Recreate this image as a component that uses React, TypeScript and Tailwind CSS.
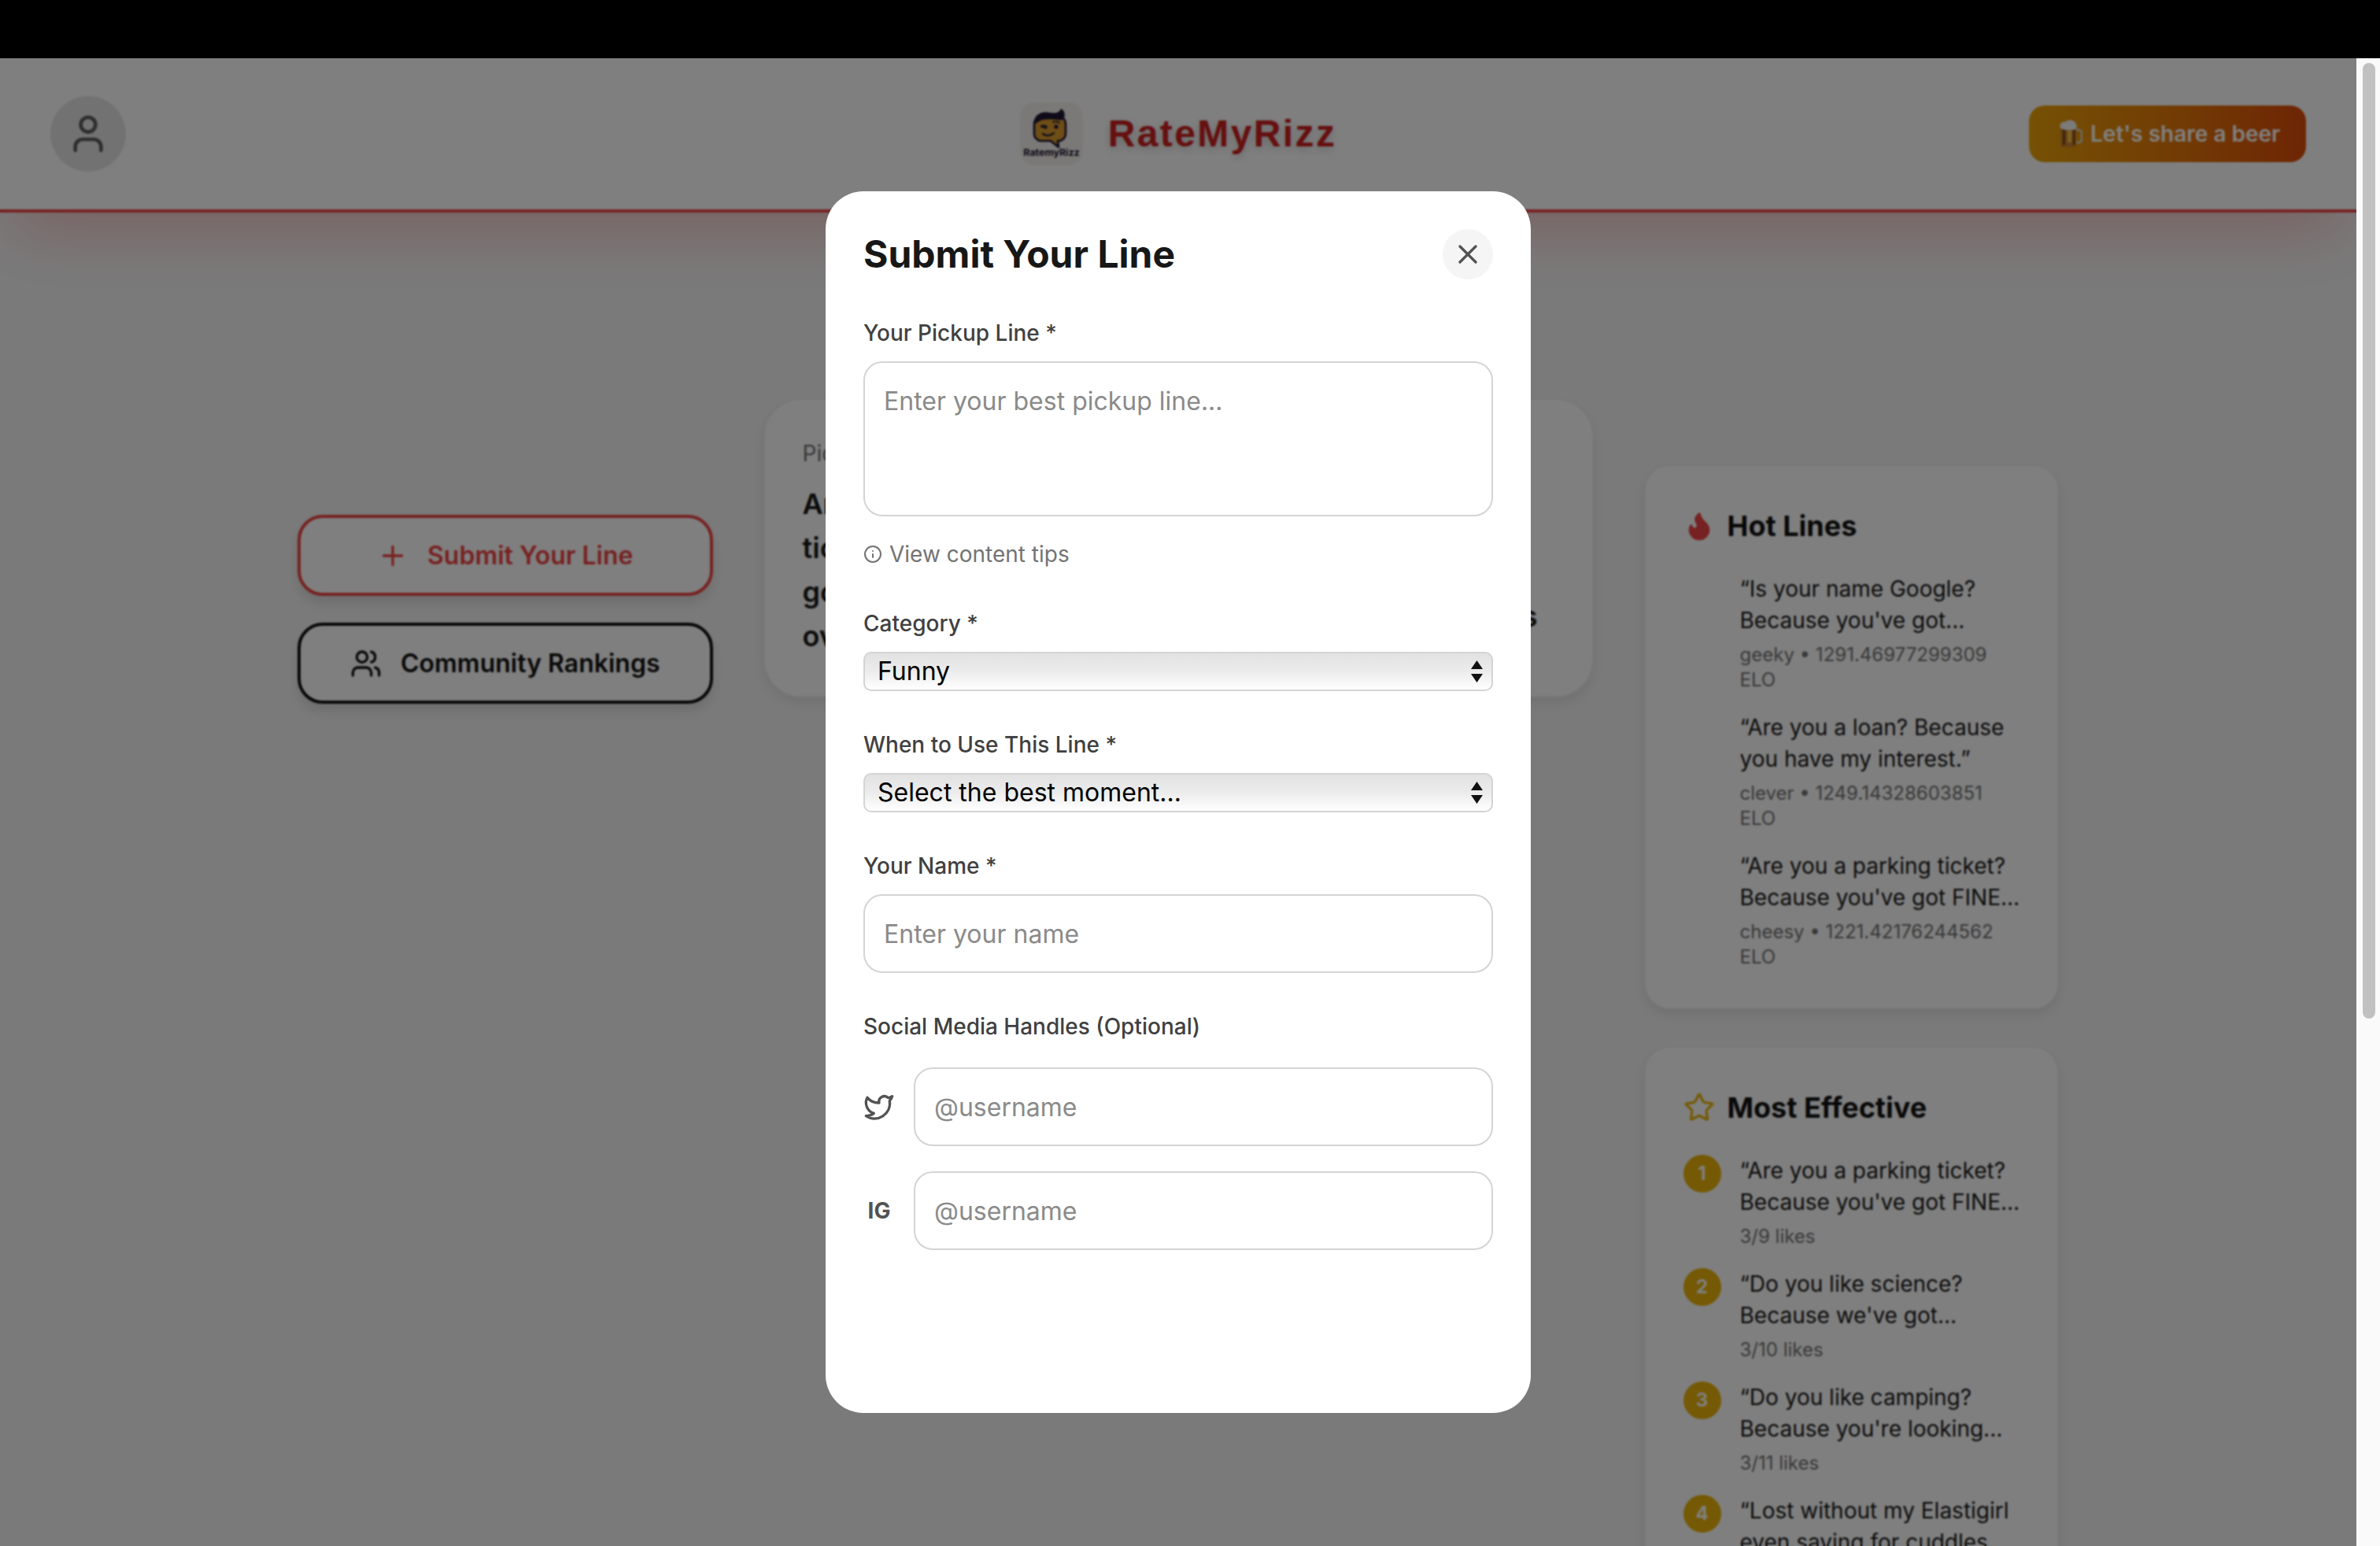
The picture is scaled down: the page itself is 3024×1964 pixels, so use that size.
import { Flame, Info, Plus, Star, Twitter, User, Users, X } from "lucide-react";

const hotLines = [
  { text: "“Is your name Google? Because you've got...", meta: "geeky • 1291.46977299309 ELO" },
  { text: "“Are you a loan? Because you have my interest.”", meta: "clever • 1249.14328603851 ELO" },
  { text: "“Are you a parking ticket? Because you've got FINE...", meta: "cheesy • 1221.42176244562 ELO" },
];

const effectiveLines = [
  { text: "“Are you a parking ticket? Because you've got FINE...", meta: "3/9 likes" },
  { text: "“Do you like science? Because we've got...", meta: "3/10 likes" },
  { text: "“Do you like camping? Because you're looking...", meta: "3/11 likes" },
  { text: "“Lost without my Elastigirl even saving for cuddles...", meta: "3/12 likes" },
];

function Logo() {
  return (
    <svg width="80" height="80" viewBox="0 0 80 80">
      <rect width="80" height="80" rx="18" fill="#f5f3ee" />
      <path
        d="M27 18h22a9 9 0 0 1 9 9v13a9 9 0 0 1-9 9h-1l1 8-10-8H27a9 9 0 0 1-9-9V27a9 9 0 0 1 9-9z"
        fill="#dd9c2e"
        stroke="#1e1533"
        strokeWidth="2.6"
        strokeLinejoin="round"
      />
      <path
        d="M18 29c-2-12 8-18 19-16 7 1 13 1 15-5 4 2 6 7 4 12-2 3-5 3-9 2-9-1-20-1-24 3-2 1-4 2-5 4z"
        fill="#1e1533"
      />
      <path d="M27 31c2-2 5-2 7 0M27 30l6 3" fill="none" stroke="#1e1533" strokeWidth="2" strokeLinecap="round" />
      <circle cx="46" cy="31" r="2.6" fill="#1e1533" />
      <path d="M42 25c3-1 6-1 8 1" fill="none" stroke="#1e1533" strokeWidth="1.8" strokeLinecap="round" />
      <path d="M29 40c4 3 10 3 14-1" fill="none" stroke="#1e1533" strokeWidth="2.2" strokeLinecap="round" />
      <text x="40" y="68" textAnchor="middle" fontFamily="Inter, sans-serif" fontWeight="700" fontSize="12.4" fill="#1e1533">
        RatemyRizz
      </text>
    </svg>
  );
}

function BeerMug() {
  return (
    <svg width="30" height="36" viewBox="0 0 30 36">
      <path d="M22 13h3a4 4 0 0 1 4 4v8a4 4 0 0 1-4 4h-3" fill="none" stroke="#d8d8d8" strokeWidth="2.4" />
      <rect x="2" y="8" width="20" height="27" rx="2.5" fill="#c9822a" />
      <rect x="5" y="13" width="3" height="19" fill="#7a4512" />
      <rect x="11" y="14" width="5" height="15" fill="#f6c14d" />
      <rect x="18" y="13" width="2.5" height="19" fill="#7a4512" />
      <path d="M2 11c-2-5 2-9 6-8 3-4 11-3 13 1 2 2 2 6 1 8-6 2-14 2-20-1z" fill="#f7f7f4" />
    </svg>
  );
}

function SideCard({
  title,
  icon,
  items,
  ranked,
}: {
  title: string;
  icon: React.ReactNode;
  items: { text: string; meta: string }[];
  ranked?: boolean;
}) {
  return (
    <section className="rounded-[32px] border-2 border-[#f0f0f0] bg-white py-12 pr-11 pl-12 shadow-[0_8px_16px_rgba(0,0,0,0.08)]">
      <div className="mb-8 flex h-14 items-center gap-4">
        {icon}
        <h2 className="text-[36px] font-bold text-[#111]">{title}</h2>
      </div>
      <div className="flex flex-col gap-6">
        {items.map((item, i) => (
          <div key={item.text} className="flex gap-6">
            {ranked ? (
              <span className="flex h-12 w-12 shrink-0 items-center justify-center rounded-full bg-[#eab308] text-[24px] font-bold text-white">
                {i + 1}
              </span>
            ) : (
              <span className="w-12 shrink-0" />
            )}
            <div>
              <p className="text-[28px] leading-10 text-[#171717]">{item.text}</p>
              <p className="mt-2 text-[24px] leading-8 text-[#737373]">{item.meta}</p>
            </div>
          </div>
        ))}
      </div>
    </section>
  );
}

function Label({ children }: { children: React.ReactNode }) {
  return <label className="mb-4 block text-[28px] leading-10 font-medium text-[#404040]">{children}</label>;
}

function TextInput({ placeholder }: { placeholder: string }) {
  return (
    <input
      placeholder={placeholder}
      className="block h-[100px] w-full rounded-[24px] border-2 border-[#d4d4d4] bg-white px-6 text-[32px] outline-none placeholder:text-[#8a8a8a]"
    />
  );
}

function NativeSelect({ value }: { value: string }) {
  return (
    <div className="relative">
      <select
        defaultValue={value}
        className="block h-[50px] w-full appearance-none rounded-[10px] border-2 border-[#d4d4d4] bg-gradient-to-b from-[#e2e2e2] via-[#ececec] to-white pl-4 text-[32px] leading-[46px] text-black outline-none"
      >
        <option>{value}</option>
      </select>
      <svg className="absolute top-[11px] right-[13px]" width="15" height="28" viewBox="0 0 15 28">
        <path d="M7.5 0L15 11H0zM0 17h15L7.5 28z" fill="#111" />
      </svg>
    </div>
  );
}

export default function App() {
  return (
    <div className="flex h-[1964px] w-[3024px] flex-col overflow-hidden bg-black font-[Inter,sans-serif]">
      <div className="h-[74px] shrink-0 bg-black" />
      <div className="flex min-h-0 flex-1">
        <div className="relative min-w-0 flex-1 overflow-hidden bg-[#f5f5f5]">
          <header className="relative grid h-[196px] grid-cols-[1fr_auto_1fr] items-center border-b-4 border-[#ef4444] bg-white px-16 shadow-[0_40px_80px_-20px_rgba(239,68,68,0.3)]">
            <button className="flex h-24 w-24 items-center justify-center rounded-full bg-[#e5e5e5] text-[#5c5c5c]">
              <User size={56} strokeWidth={2} />
            </button>
            <div className="flex items-center gap-8">
              <Logo />
              <h1 className="font-['Liberation_Sans',sans-serif] text-[48px] font-bold tracking-[2.4px] text-[#cc2020] [text-shadow:0_4px_12px_rgba(0,0,0,0.2)]">
                RateMyRizz
              </h1>
            </div>
            <button className="flex h-[72px] w-[352px] items-center gap-[10px] justify-self-end rounded-[20px] bg-gradient-to-r from-[#eaa308] to-[#dc4a08] pl-[38px] text-[28px] font-semibold text-white">
              <BeerMug />
              Let's share a beer
            </button>
          </header>

          <main className="mx-auto grid w-[2238px] grid-cols-[1fr_2fr_1fr] items-start gap-16 pt-[236px]">
            <div className="mt-[148px] flex flex-col gap-[34px]">
              <button className="flex h-[103px] items-center justify-center gap-6 rounded-[32px] border-4 border-[#ef4444] bg-white text-[32px] font-semibold text-[#ef4444] shadow-[0_10px_15px_rgba(0,0,0,0.1)]">
                <Plus size={40} strokeWidth={2} />
                Submit Your Line
              </button>
              <button className="flex h-[103px] items-center justify-center gap-6 rounded-[32px] border-4 border-[#111] bg-white text-[32px] font-semibold text-[#111] shadow-[0_10px_15px_rgba(0,0,0,0.1)]">
                <Users size={40} strokeWidth={2} />
                Community Rankings
              </button>
            </div>

            <article className="rounded-[48px] border-2 border-[#f0f0f0] bg-white p-12 shadow-[0_8px_16px_rgba(0,0,0,0.08)]">
              <p className="mb-4 text-[28px] leading-10 text-[#737373]">Pickup Line</p>
              <div className="flex items-end justify-between pr-[21px]">
                <p className="text-[36px] leading-14 font-semibold text-[#171717]">
                  <span className="block">Are you an airplane? Because I just bought a</span>
                  <span className="block">ticket to wherever you happen to be flying,</span>
                  <span className="block">going with you on every one of my long trips</span>
                  <span className="block">over the ocean.</span>
                </p>
                <span className="mb-[25px] text-[36px] leading-14 font-semibold text-[#171717]">Thanks</span>
              </div>
            </article>

            <div className="mt-[84px] flex flex-col gap-[47px]">
              <SideCard
                title="Hot Lines"
                icon={<Flame size={40} className="text-[#ef4444]" fill="currentColor" />}
                items={hotLines}
              />
              <SideCard
                title="Most Effective"
                icon={<Star size={40} className="text-[#eab308]" />}
                items={effectiveLines}
                ranked
              />
            </div>
          </main>

          {/* modal over the whole page */}
          <div className="absolute inset-0 flex items-center justify-center bg-black/50 backdrop-blur-[1px]">
            <div className="h-[1552px] w-[896px] overflow-hidden rounded-[48px] bg-white p-12">
              <div className="mb-12 flex h-16 items-center justify-between">
                <h2 className="text-[48px] font-bold text-[#171717]">Submit Your Line</h2>
                <button className="flex h-16 w-16 items-center justify-center rounded-full bg-[#f5f5f5] text-[#525252]">
                  <X size={40} strokeWidth={2} />
                </button>
              </div>

              <form className="flex flex-col gap-12">
                <div>
                  <Label>Your Pickup Line *</Label>
                  <textarea
                    placeholder="Enter your best pickup line..."
                    className="block h-[197px] w-full resize-none rounded-[24px] border-2 border-[#d4d4d4] bg-white px-6 py-[25px] text-[32px] leading-[48px] outline-none placeholder:text-[#8a8a8a]"
                  />
                  <div className="mt-7 flex items-center gap-[9px] text-[28px] leading-10 text-[#737373]">
                    <Info size={24} strokeWidth={2} />
                    View content tips
                  </div>
                </div>
                <div>
                  <Label>Category *</Label>
                  <NativeSelect value="Funny" />
                </div>
                <div>
                  <Label>When to Use This Line *</Label>
                  <NativeSelect value="Select the best moment..." />
                </div>
                <div>
                  <Label>Your Name *</Label>
                  <TextInput placeholder="Enter your name" />
                </div>
                <div>
                  <Label>
                    <span className="mb-8 block">Social Media Handles (Optional)</span>
                  </Label>
                  <div className="flex flex-col gap-8">
                    <div className="flex items-center gap-6">
                      <Twitter size={40} strokeWidth={2} className="shrink-0 text-[#525252]" />
                      <TextInput placeholder="@username" />
                    </div>
                    <div className="flex items-center gap-6">
                      <span className="w-10 shrink-0 text-center text-[28px] font-bold text-[#525252]">IG</span>
                      <TextInput placeholder="@username" />
                    </div>
                  </div>
                </div>
              </form>
            </div>
          </div>
        </div>

        {/* browser scrollbar */}
        <div className="w-[30px] shrink-0 bg-[#fafafa] pt-[6px] pl-2">
          <div className="h-[1214px] w-4 rounded-full bg-[#c1c1c1]" />
        </div>
      </div>
    </div>
  );
}
